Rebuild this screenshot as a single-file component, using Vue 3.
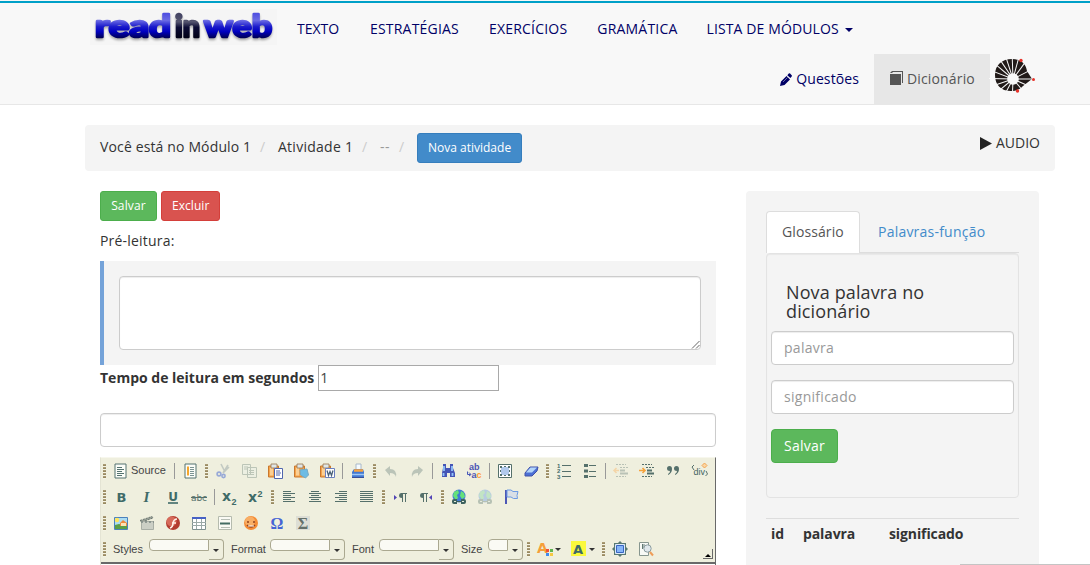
<script setup>
import { ref } from 'vue'

const links = ['TEXTO', 'ESTRATÉGIAS', 'EXERCÍCIOS', 'GRAMÁTICA']
const seconds = ref('1')

const page = '<path d="M3 1h11v14H3z" fill="#fbfdf8" stroke="#547370"/>'
const board = '<path d="M1.500 3h10v11h-10z" fill="#f6a54c" stroke="#c9782e"/><path d="M3 4.500h3v8H3z" fill="#fbcf94"/><path d="M4 1h6v4H4z" fill="#dfe6e8" stroke="#98754c" stroke-width=".8"/>'
const globe = (a, b, c) => `<circle cx="8" cy="7" r="6.5" fill="${a}"/><path d="M3 3l4-2 1 3-2 2 1 3-2 2-3-4zM10 2l3 2 1 4-3 2-2-3z" fill="${b}"/><path d="M1 12q0-2 2-2h3v2h4v-2h3q2 0 2 2v1q0 2-2 2h-3v-2H6v2H3q-2 0-2-2z" fill="${c}"/><path d="M3 12h2v1H3zM11 12h2v1h-2z" fill="#e5ebdd"/>`
const icons = {
  source: page + '<path d="M5 4.500h5M5 6.500h7M5 8.500h5M5 10.500h7M5 12.500h5" stroke="#547370"/>',
  templates: page + '<path d="M6 3.500v9" stroke="#f5a62c" stroke-width="2"/><path d="M8 4.500h4M8 6.500h4M8 8.500h4M8 10.500h4M8 12.500h4" stroke="#7b9392"/>',
  cut: '<path d="M6 1l4 8M13 2L8 10M14 4l-6 6" stroke="#c2c9c2" stroke-width="1.6"/><circle cx="4" cy="11" r="1.900" fill="none" stroke="#98a9d7" stroke-width="1.600"/><circle cx="8.500" cy="13" r="1.600" fill="none" stroke="#98a9d7" stroke-width="1.600"/>',
  copy: '<path d="M1.500 1.500h8v10h-8zM6.500 4.500h9v10h-9z" fill="#ecefe2" stroke="#bcc5b7"/><path d="M3 4h4M3 6h3M8 7.500h5M8 9.500h5M8 11.500h5" stroke="#bcc5b7"/>',
  paste: board + '<path d="M7.500 5.500h8v10h-8z" fill="#fff" stroke="#5066ae"/><path d="M9 8h4M9 10h5M9 12h4" stroke="#5066ae"/>',
  pastetext: board + '<path d="M7 7l7-1 1.500 6-3 3-5-3z" fill="#6dbce5" stroke="#72a9c4"/>',
  pasteword: board + '<path d="M6.500 5.500h9v9h-9z" fill="#fff" stroke="#6b80c0"/><path d="M8 7.500l1.500 5 1.500-4 1.500 4 1.500-5" fill="none" stroke="#496078" stroke-width="1.300"/>',
  print: '<path d="M6 1h5v6H6z" fill="#f5fbff" stroke="#a9b8c8"/><path d="M2 9l2-3h9l1 3v6H2z" fill="#4278d1"/><path d="M4 7.500h9" stroke="#f7a23d" stroke-width="2.500"/><path d="M2 11.500h12" stroke="#9dc7f5" stroke-width="1.500"/><path d="M2 14.500h12" stroke="#384f99"/>',
  undo: '<path d="M2 7l5-4v3q7 0 6 8-1-4-6-4v3z" fill="#bbc4b8"/>',
  redo: '<path d="M14 7L9 3v3q-7 0-6 8 1-4 6-4v3z" fill="#bbc4b8"/>',
  find: '<path d="M3 1h3v4h4V1h3v4l2 5v4h-5v-4H7v4H2v-4l1-5z" fill="#4555b6"/><path d="M4 3v5M12 3v5M3.500 10v3M12.500 10v3" stroke="#91c2fa" stroke-width="1.800"/>',
  replace: '<text x="3" y="7" class="micro">ab</text><text x="5.500" y="15" class="micro">a<tspan fill="#ff9b35">c</tspan></text><path d="M1.500 8.500v3h3M3 9.500l2 2-2 1.500" fill="none" stroke="#4555b6"/>',
  selectall: '<path d="M1.500 1.500h13v13h-13z" fill="#fff" stroke="#55706b"/><path d="M4 4h8v8H4z" fill="#b1c9ec"/><path d="M3 3h2v2H3zM11 3h2v2h-2zM3 11h2v2H3zM11 11h2v2h-2zM7 3h2v1H7zM7 12h2v1H7zM3 7h1v2H3zM12 7h1v2h-1z" fill="#55706b"/>',
  eraser: '<path d="M2 10l5-6h8l-1 4-5 5H2z" fill="#4c70d5" stroke="#4050a7"/><path d="M3 9.500l4.500-5H14L9 9.500z" fill="#b3d5fa"/>',
  ol: '<path d="M6 2.500h9M6 8.500h9M6 13.500h9" stroke="#55706b"/><text x="1" y="5" class="digit">1</text><text x="1" y="10" class="digit">2</text><text x="1" y="15.500" class="digit">3</text>',
  ul: '<path d="M2 1h4v3H2zM2 6.500h4v3H2zM2 12h4v3H2z" fill="#55706b"/><path d="M7 2.500h7M7 8.500h7M7 13.500h7" stroke="#55706b"/>',
  outdent: '<path d="M3 1.500h10M7 4.500h9M3 13.500h10" stroke="#b9c2b6" stroke-dasharray="2 1"/><path d="M7 7.500h5M7 10.500h8" stroke="#b9c2b6" stroke-width="2"/><path d="M6 7.500H1M3.500 5L1 7.500 3.500 10" fill="none" stroke="#f4d5a8" stroke-width="1.500"/>',
  indent: '<path d="M3 1.500h10M7 4.500h9M3 13.500h10" stroke="#55706b" stroke-dasharray="2 1"/><path d="M8 7.500h5M8 10.500h7" stroke="#55706b" stroke-width="2"/><path d="M0 7.500h6M3.500 5L6 7.500 3.500 10" fill="none" stroke="#f6a33c" stroke-width="1.600"/>',
  quote: '<path d="M3 11q2-1 2-3-3 0-3-2.500T4.500 3 7 6q0 4-4 6zM10 11q2-1 2-3-3 0-3-2.500T11.500 3 14 6q0 4-4 6z" fill="#55706b"/>',
  div: '<path d="M3 2L1 4l2 3M15 8l1.500 3-2 2" fill="none" stroke="#55706b"/><text x="2.500" y="12" class="divtext">div</text><path d="M13.500 0L16 2.500 13.500 5 11 2.500z" fill="#fbd6a4" stroke="#f3a551"/>',
  bold: '<text x="8.500" y="13" text-anchor="middle" class="letter">B</text>',
  italic: '<text x="7.500" y="13" text-anchor="middle" class="letter ital">I</text>',
  underline: '<text x="8" y="12" text-anchor="middle" class="letter ul">U</text><path d="M3 14h10" stroke="#3f6b68" stroke-width="1.600"/>',
  strike: '<text x="0" y="11.500" class="small" textLength="16">abc</text><path d="M0 8.500h16" stroke="#55706b"/>',
  sub: '<text x="0" y="12" class="letter x">x</text><text x="9.500" y="15.500" class="digit big">2</text>',
  sup: '<text x="0" y="13" class="letter x">x</text><text x="9.500" y="8" class="digit big">2</text>',
  left: '<path d="M2 2.500h8M2 4.500h12M2 6.500h8M2 8.500h12M2 10.500h8M2 12.500h12" stroke="#55706b"/>',
  center: '<path d="M4 2.500h8M2 4.500h12M4 6.500h8M2 8.500h12M4 10.500h8M2 12.500h12" stroke="#55706b"/>',
  right: '<path d="M6 2.500h8M2 4.500h12M6 6.500h8M2 8.500h12M6 10.500h8M2 12.500h12" stroke="#55706b"/>',
  justify: '<path d="M1 2.500h13M1 4.500h13M1 6.500h13M1 8.500h13M1 10.500h13M1 12.500h13" stroke="#55706b"/>',
  ltr: '<path d="M2 6l3 2.500L2 11z" fill="#5143b5"/><path d="M9 4h6v1h-1v8h-1V5h-2v8h-1V9Q7 9 7 6.500 7 4 9 4z" fill="#55706b"/>',
  rtl: '<path d="M14 6l-3 2.500 3 2.500z" fill="#5143b5"/><path d="M4 4h6v1H9v8H8V5H6v8H5V9Q2 9 2 6.500 2 4 4 4z" fill="#55706b"/>',
  link: globe('#3f7ad5', '#64e179', '#3e625f'),
  unlink: globe('#b7cce0', '#c2e4c4', '#b6c1b4'),
  anchor: '<path d="M2 1h2v14H2z" fill="#4c57b6"/><path d="M4 1h4l2 1.500h5l-1 4 .5 3h-4L8 8H4z" fill="#d9dfe6" stroke="#6c9ae3"/>',
  image: '<path d="M1.500 2.500h13v12h-13z" fill="#acdcf1" stroke="#4b81bc"/><circle cx="4" cy="5" r="2.200" fill="#ffe45d"/><path d="M2 10l4-1 4 1h4v4H2z" fill="#5b9e46"/><path d="M7 8l3-3 4 3v3H7z" fill="#f08a3c"/><path d="M8 8h5v3H8z" fill="#fbe2b4"/>',
  movie: '<path d="M1 5.500l12-4 1 1.500L3 7z" fill="#98a097" stroke="#6c7771" stroke-dasharray="2 1"/><path d="M2.500 6.500h12v8h-12z" fill="#cbcfc5" stroke="#a8aea5"/><path d="M2 7h13" stroke="#7f8a85" stroke-width="1.500" stroke-dasharray="2 2"/>',
  flash: '<circle cx="8" cy="8" r="7" fill="#b33c30"/><circle cx="6.500" cy="6.500" r="5" fill="#d66a5a"/><path d="M5 13q3-1 3-5 1-4 4-4M7 8h4" fill="none" stroke="#fff1e9" stroke-width="1.600"/>',
  table: '<path d="M1.500 2.500h13v12h-13z" fill="#fff" stroke="#7f918f"/><path d="M1 3h14" stroke="#4761c5" stroke-width="2"/><path d="M1 7.500h14M1 10.500h14M5.500 4v10M10.500 4v10" stroke="#9ba9a7"/>',
  hr: '<path d="M1.500 1.500h13v13h-13z" fill="#fafaf4" stroke="#b5bbae"/><path d="M4 4.500h9M4 12.500h9" stroke="#b7beb5"/><path d="M3 8.500h10" stroke="#446c63" stroke-width="2"/>',
  smiley: '<circle cx="8" cy="8" r="7" fill="#f58c35"/><circle cx="7" cy="6.500" r="5" fill="#f8ae65"/><path d="M4 7h2M10 7h2M4 10q4 4 8 0" fill="none" stroke="#91411b" stroke-width="1.400"/><path d="M5 11h6" stroke="#fff"/>',
  omega: '<text x="8" y="14" text-anchor="middle" class="omega">Ω</text>',
  sigma: '<path d="M1 1h14v14H1z" fill="#ddded5"/><text x="8" y="13.500" text-anchor="middle" class="sigma">Σ</text>',
  maximize: '<path d="M8 0l2 2h4v4l2 2-2 2v4h-4l-2 2-2-2H2v-4L0 8l2-2V2h4z" fill="#587872"/><path d="M3.500 3.500h9v9h-9z" fill="#dceafa" stroke="#dceafa"/><path d="M4.500 4.500h7v7h-7z" fill="#86b5f8" stroke="#3966c0"/>',
  preview: '<path d="M1.500 1.500h9v13h-9z" fill="#f8faf6" stroke="#87968f"/><path d="M4 4h3M4 6h2M4.500 3v5" stroke="#617873"/><circle cx="9.500" cy="7.500" r="3.700" fill="#dfe7eb" stroke="#8c9da0"/><path d="M12 11l3 3.500" stroke="#ef9d58" stroke-width="2"/>'
}
const rows = [
  ['|h', 'Source', '|s', 'templates', '|h', 'cut', 'copy', 'paste', 'pastetext', 'pasteword', '|s', 'print', '|h', 'undo', 'redo', '|s', 'find', 'replace', '|s', 'selectall', 'eraser', '|h', 'ol', 'ul', '|s', 'outdent', 'indent', 'quote', 'div'],
  ['|h', 'bold', 'italic', 'underline', 'strike', '|s', 'sub', 'sup', '|h', 'left', 'center', 'right', 'justify', '|h', 'ltr', 'rtl', '|h', 'link', 'unlink', 'anchor'],
  ['|h', 'image', 'movie', 'flash', 'table', 'hr', 'smiley', 'omega', 'sigma']
]
const combos = ['Styles', 'Format', 'Font', 'Size']
const rays = [0, 24, 50, 92, 118, 140, 161, 181, 201, 220, 236, 252, 268, 285, 306, 333]
</script>

<template>
  <div class="screen">
    <header class="navbar">
      <div class="nav-row">
        <div class="brand">
          <svg width="187" height="36" viewBox="0 0 187 36">
            <defs>
              <linearGradient id="blue" gradientUnits="userSpaceOnUse" x1="0" y1="3" x2="0" y2="31">
                <stop offset="0" stop-color="#4a4ae0" /><stop offset=".3" stop-color="#6a6ae4" /><stop offset=".52" stop-color="#1c1ccc" /><stop offset=".7" stop-color="#0000c0" /><stop offset="1" stop-color="#000030" />
              </linearGradient>
              <linearGradient id="dark" gradientUnits="userSpaceOnUse" x1="0" y1="3" x2="0" y2="31">
                <stop offset="0" stop-color="#404060" /><stop offset=".35" stop-color="#55556f" /><stop offset=".55" stop-color="#0c0c34" /><stop offset="1" stop-color="#000010" />
              </linearGradient>
            </defs>
            <rect width="187" height="36" fill="#f5f5f5" />
            <g class="logo">
              <text x="5" y="27.500" textLength="76" lengthAdjust="spacingAndGlyphs" fill="url(#blue)" stroke="url(#blue)">read</text>
              <text x="85" y="27.500" textLength="25" lengthAdjust="spacingAndGlyphs" fill="url(#dark)" stroke="url(#dark)">in</text>
              <text x="114" y="27.500" textLength="68" lengthAdjust="spacingAndGlyphs" fill="url(#blue)" stroke="url(#blue)">web</text>
            </g>
          </svg>
        </div>
        <nav>
          <a v-for="l in links" :key="l" :class="{ spread: l !== 'TEXTO' }">{{ l }}</a>
          <a class="modules">LISTA DE MÓDULOS <i class="caret"></i></a>
        </nav>
      </div>
      <div class="nav-row second">
        <a><svg class="glyph" width="12" height="13" viewBox="0 0 12 13"><path d="M0 13l1-4.500L6.500 3 10 6.500 4.500 12zM7.300 2.200l1.500-1.600q.7-.5 1.300 0l1.600 1.600q.6.600 0 1.200l-1.300 1.700z" fill="#006" /><path d="M3 9l4.500-4.500" stroke="#8989bb" stroke-width=".8" /></svg><span class="q">Questões</span></a>
        <a class="active"><svg class="glyph" width="13" height="14" viewBox="0 0 13 14"><path d="M0 3h11v11H0zM0 2l2-2h11v12h-1V1H3L2 2z" fill="#555" /></svg><span class="d">Dicionário</span></a>
        <svg class="unicamp" width="44" height="40" viewBox="0 0 44 40">
          <path d="M21 2C31 2 35 8 36 14l5 8-9 7c-4 4-7 5-12 5C10 34 4 28 4 18S11 2 21 2z" fill="#211a18" />
          <path v-for="r in rays" :key="r" d="M22 22h24" :transform="`rotate(${r} 22 22)`" stroke="#f8f8f8" stroke-width="1" />
          <circle cx="22" cy="22" r="5.800" fill="#f8f8f8" />
          <circle cx="30" cy="3.500" r="1.700" fill="#e6332a" /><circle cx="42.500" cy="22.500" r="1.500" fill="#e6332a" /><circle cx="26.500" cy="34" r="1.700" fill="#e6332a" />
        </svg>
      </div>
    </header>

    <main class="container">
      <div class="breadcrumb">
        <span class="where">Você está no Módulo 1</span><i class="slash">/</i>
        <span class="activity">Atividade 1</span><i class="slash">/</i>
        <span class="muted">--</span><i class="slash third">/</i>
        <button class="btn small primary">Nova atividade</button>
        <span class="audio"><svg width="12" height="13" viewBox="0 0 12 13"><path d="M0 0l12 6.500L0 13z" fill="#222" /></svg>AUDIO</span>
      </div>

      <div class="columns">
        <section class="content">
          <div class="actions">
            <button class="btn small success">Salvar</button>
            <button class="btn small danger">Excluir</button>
          </div>
          <div class="prelabel">Pré-leitura:</div>
          <div class="callout">
            <div class="area"><svg width="8" height="8" viewBox="0 0 8 8"><path d="M0 7.500L7.500 0M4 7.500L7.500 4" stroke="#555" stroke-width=".9" /></svg></div>
          </div>
          <div class="time"><b>Tempo de leitura em segundos</b><input v-model="seconds" /></div>
          <input class="field title" />

          <div class="editor">
            <div v-for="(row, i) in rows" :key="i" class="tools">
              <template v-for="(t, j) in row" :key="j">
                <span v-if="t === '|h'" class="handle"></span>
                <span v-else-if="t === '|s'" class="sep"></span>
                <span v-else-if="t === 'Source'" class="tool source"><svg width="16" height="16" viewBox="0 0 16 16" v-html="icons.source"></svg>Source</span>
                <span v-else class="tool"><svg width="16" height="16" viewBox="0 0 16 16" v-html="icons[t]"></svg></span>
              </template>
            </div>
            <div class="tools last">
              <span class="handle"></span>
              <span v-for="c in combos" :key="c" class="combo" :class="c.toLowerCase()"><label>{{ c }}</label><span class="value"></span><span class="open"><i class="tick"></i></span></span>
              <span class="handle"></span>
              <span class="color"><svg width="16" height="16" viewBox="0 0 16 16"><text x="0" y="12" class="cletter">A</text><path d="M9 8h3v3H9z" fill="#f05038" /><path d="M13 8h3v3h-3z" fill="#60b450" /><path d="M9 12h3v3H9z" fill="#408cf0" /><path d="M13 12h3v3h-3z" fill="#f5c842" /></svg><i class="tick"></i></span>
              <span class="color"><svg width="16" height="16" viewBox="0 0 16 16"><path d="M0 0h15v15H0z" fill="#fbf93c" /><text x="2" y="12.500" class="letter">A</text></svg><i class="tick"></i></span>
              <span class="handle"></span>
              <span class="tool"><svg width="16" height="16" viewBox="0 0 16 16" v-html="icons.maximize"></svg></span>
              <span class="tool"><svg width="16" height="16" viewBox="0 0 16 16" v-html="icons.preview"></svg></span>
              <span class="collapse"><i></i></span>
            </div>
          </div>
        </section>

        <aside class="sidebar">
          <div class="tabs"><span class="tab current">Glossário</span><span class="tab">Palavras-função</span></div>
          <div class="panel">
            <h4>Nova palavra no dicionário</h4>
            <input class="field" placeholder="palavra" />
            <input class="field" placeholder="significado" />
            <button class="btn success save">Salvar</button>
          </div>
          <div class="thead"><b>id</b><b>palavra</b><b>significado</b></div>
        </aside>
      </div>
    </main>
    <div class="status-edge"></div>
  </div>
</template>

<style>
body { background: #fff; overflow: hidden; }
</style>

<style scoped>
* { box-sizing: border-box; }
.screen { position: relative; width: 1090px; height: 565px; overflow: hidden; font: 14px/20px "Open Sans", "Noto Sans", sans-serif; color: #333; }
i { font-style: normal; }
svg { display: block; flex: none; overflow: visible; }
.navbar { height: 105px; background: #f8f8f8; border-bottom: 1px solid #e7e7e7; padding-top: 1px; }
.navbar::before { content: ""; display: block; height: 2px; background: #00a0c8; }
.nav-row { display: flex; height: 51px; padding-left: 85px; color: #006; }
.brand { padding: 6px 5px 0; width: 197px; }
.logo { font: 700 31px/36px "Lato", sans-serif; stroke-width: 2.6px; stroke-linejoin: round; filter: drop-shadow(0 2px 1px #aaa); }
nav { display: flex; }
.nav-row a { display: flex; align-items: center; padding: 0 15px; white-space: nowrap; }
nav a { height: 51px; }
nav a:first-child { width: 73px; }
.spread { letter-spacing: .2px; }
.modules { letter-spacing: .12px; margin-left: -1px; }
.caret { border: 4px solid transparent; border-top-color: #006; border-bottom: 0; margin-left: 6px; margin-top: 3px; }
.second { height: 50px; justify-content: flex-end; padding-right: 54px; }
.second .active { background: #e7e7e7; color: #555; }
.glyph { margin-right: 4px; }
.active .glyph { margin-right: 4px; margin-left: 1px; margin-top: -2px; }
.q { letter-spacing: .1px; }
.d { letter-spacing: .15px; width: 68px; }
.unicamp { margin: 3px 1px 0 1px; }
.container { width: 970px; margin-left: 85px; padding-top: 20px; }
.breadcrumb { display: flex; align-items: center; height: 46px; background: #f4f4f4; border-radius: 4px; padding: 0 15px; }
.breadcrumb > span { position: relative; top: -1px; }
.where { width: 151px; letter-spacing: .14px; white-space: nowrap; }
.activity { width: 75px; letter-spacing: .26px; white-space: nowrap; }
.slash { color: #ccc; padding: 0 12px 0 9px; width: 27px; position: relative; top: -1px; }
.muted { color: #999; width: 10px; letter-spacing: .5px; }
.third { width: 27px; }
.audio { display: flex; align-items: center; gap: 4px; margin-left: auto; margin-top: -8px; }
.btn { font: 14px/20px "Open Sans", sans-serif; color: #fff; border: 1px solid; border-radius: 4px; padding: 6px 12px; height: 34px; display: inline-block; }
.btn.small { font-size: 12px; line-height: 18px; border-radius: 3px; height: 30px; padding: 5px 10px; }
.actions .success { width: 57px; letter-spacing: .15px; }
.actions .danger { width: 59px; letter-spacing: .05px; }
.btn.save { width: 67px; letter-spacing: .25px; }
.primary { background: #428bca; border-color: #357ebd; }
.success { background: #5cb85c; border-color: #4cae4c; }
.danger { background: #d9534f; border-color: #d43f3a; }
.columns { display: flex; gap: 30px; padding: 20px 0 0 15px; align-items: flex-start; }
.content { width: 616px; }
.actions { display: flex; gap: 4px; }
.prelabel { margin: 10px 0; letter-spacing: .2px; }
.callout { height: 104px; background: #f4f4f4; border-left: 4px solid #75a3d9; padding: 15px; }
.area { height: 74px; border: 1px solid #ccc; border-radius: 4px; background: #fff; box-shadow: inset 0 1px 1px rgba(0,0,0,.075); display: flex; align-items: flex-end; justify-content: flex-end; }
.time { display: flex; align-items: center; gap: 4px; height: 26px; }
.time input { width: 181px; height: 26px; border: 1px solid #a9a9a9; padding: 0 1px 2px; font: 14px/20px "Open Sans", sans-serif; color: #444; background: #fff; outline: 0; }
.field { display: block; width: 100%; height: 34px; border: 1px solid #ccc; border-radius: 4px; background: #fff; padding: 5px 12px 7px; font: 14px/20px "Open Sans", sans-serif; box-shadow: inset 0 1px 1px rgba(0,0,0,.075); outline: 0; }
.field::placeholder { color: #999; opacity: 1; letter-spacing: .28px; }
.title { margin-top: 22px; }
.editor { margin-top: 10px; height: 120px; border-top: 1px solid #f7f7ed; border-left: 1px solid #e4e4d4; border-right: 1px solid #696969; background: linear-gradient(#efefde, #efefde) top/100% 104px no-repeat, linear-gradient(#696969, #696969) 0 104px/100% 2px no-repeat #fff; font: 11px/16px "Liberation Sans", sans-serif; color: #444; }
.tools { display: flex; align-items: center; height: 26px; }
.tool { width: 26px; display: flex; justify-content: center; }
.source { width: 64px; justify-content: flex-start; padding-left: 4px; gap: 3px; line-height: 14px; }
.handle { width: 3px; height: 15px; margin: 0 2px; background: repeating-linear-gradient(#aa9b74 0 1px, #988a62 1px 2px, #f5f4e5 2px 3px); flex: none; }
.sep { width: 1px; height: 16px; margin: 0 2px; background: #999; flex: none; }
.tools :deep(.micro) { font: 700 9px/8px "Liberation Sans", sans-serif; fill: #4b54b4; }
.tools :deep(.digit) { font: 700 6px "Liberation Sans", sans-serif; fill: #3f6b68; }
.tools :deep(.digit.big) { font-size: 9px; }
.tools :deep(.divtext) { font: 9px "Liberation Sans", sans-serif; fill: #3f6460; }
.tools :deep(.letter) { font: 700 13px "DejaVu Sans", sans-serif; fill: #3f6b68; }
.tools :deep(.letter.ital) { font: italic 700 15px "Liberation Serif", serif; }
.tools :deep(.letter.ul) { font-size: 12px; }
.tools :deep(.letter.x) { font-size: 14px; }
.tools :deep(.small) { font: 9px "DejaVu Sans", sans-serif; fill: #55706b; }
.tools :deep(.omega) { font: 700 16px "Liberation Serif", serif; fill: #4664d5; }
.tools :deep(.sigma) { font: 700 16px "Liberation Serif", serif; fill: #65706a; }
.cletter { font: 700 14px "DejaVu Sans", sans-serif; fill: #f5a03a; }
.combo { display: flex; height: 21px; margin-top: 1px; margin-right: 2px; }
.combo label { padding: 2px 0 0 5px; width: 41px; }
.value { width: 60px; height: 12px; border: 1px solid #aaa890; border-radius: 4px 0 0 4px; background: #fafaf4; }
.open { width: 15px; height: 21px; border: 1px solid #aaa890; border-left: 0; border-radius: 0 4px 4px 0; padding: 9px 0 0 4px; }
.format label { width: 44px; }
.font label { width: 32px; }
.size label { width: 32px; }
.size .value { width: 20px; }
.tick { display: block; width: 0; height: 0; border: 3px solid transparent; border-top-color: #333; border-bottom: 0; }
.color { width: 34px; display: flex; align-items: center; gap: 2px; padding-left: 5px; }
.color + .handle { margin-left: 2px; }
.collapse { width: 10px; height: 10px; margin: 9px 2px 0 auto; border-right: 1px solid #696969; border-bottom: 1px solid #696969; padding: 5px 0 0 2px; }
.collapse i { display: block; border: 3px solid transparent; border-bottom-color: #000; border-top: 0; width: 6px; }
.sidebar { width: 293px; height: 420px; background: #f4f4f4; border-radius: 4px; padding: 20px; }
.tabs { display: flex; height: 42px; border-bottom: 1px solid #ddd; }
.tab { height: 41px; padding: 11px 16px 0; color: #428bca; margin-left: 2px; letter-spacing: .22px; }
.current { width: 94px; height: 42px; margin-left: 0; padding: 10px 15px; border: 1px solid #ddd; border-bottom: 0; border-radius: 4px 4px 0 0; background: #fff; color: #555; letter-spacing: .1px; }
.panel { height: 245px; border: 1px solid #e3e3e3; border-radius: 4px; padding: 29px 4px 0; box-shadow: inset 0 1px 1px rgba(0,0,0,.05); }
h4 { margin: 0 0 10px; padding: 0 15px; font: 400 18px/19px "Open Sans", sans-serif; height: 38px; letter-spacing: .12px; }
.panel .field { margin-bottom: 15px; }
.thead { display: grid; grid-template-columns: 32px 86px 1fr; margin-top: 20px; border-top: 1px solid #ddd; padding: 5px 5px; letter-spacing: -.1px; }
.status-edge { position: absolute; right: 0; bottom: 0; width: 130px; height: 1px; background: #c4c4c4; }
</style>
